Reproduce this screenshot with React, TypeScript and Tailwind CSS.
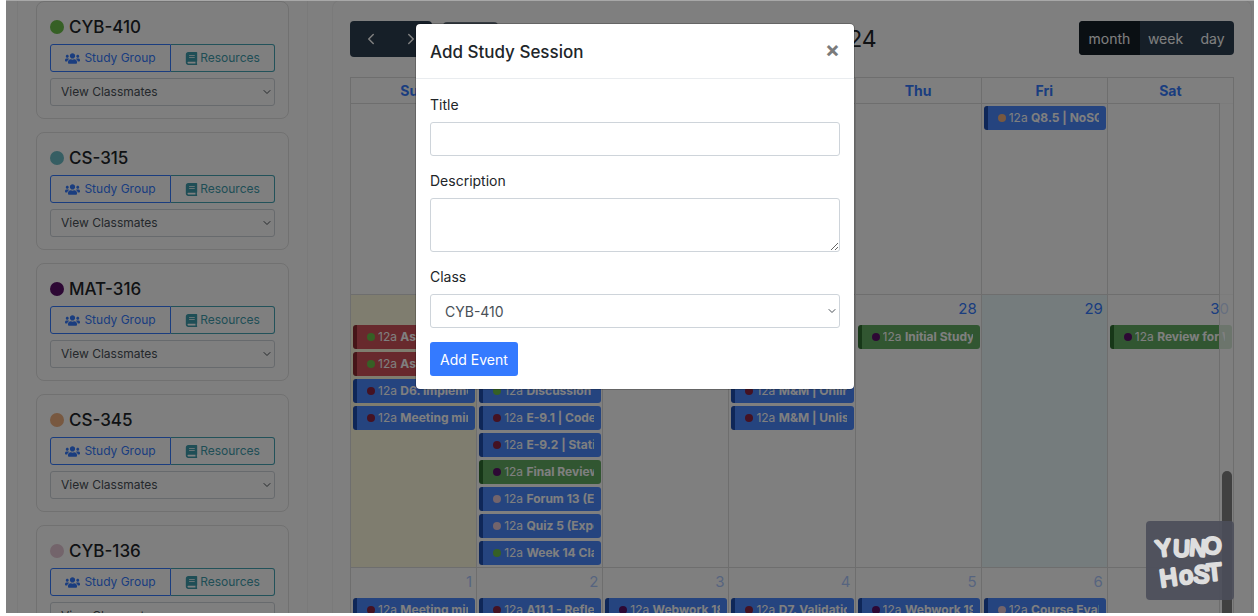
import React from "react";
import { FaBook, FaUsers } from "react-icons/fa";
import { ChevronDown, ChevronLeft, ChevronRight } from "lucide-react";

type Tone = "blue" | "green" | "red";
type CalendarEvent = { title: string; tone: Tone; dot: string } | null;
type Day = { num: string; muted?: boolean; bg?: string; events: CalendarEvent[] };

const tones: Record<Tone, string> = {
  blue: "bg-[#4a88ff] border-[#1f4fb0]",
  green: "bg-[#63ad63] border-[#2f6f30]",
  red: "bg-[#d0535a] border-[#8c2a31]",
};

const GREEN = "bg-[#6cc04a]";
const MAROON = "bg-[#8a2445]";
const PURPLE = "bg-[#5b1169]";
const ORANGE = "bg-[#f0b080]";
const PINK = "bg-[#e6c8d6]";

const courses = [
  { name: "CYB-410", color: "bg-[#6cc04a]" },
  { name: "CS-315", color: "bg-[#6cbcc6]" },
  { name: "MAT-316", color: "bg-[#5b1169]" },
  { name: "CS-345", color: "bg-[#f0b080]" },
  { name: "CYB-136", color: "bg-[#e6c8d6]" },
];

const ev = (title: string, dot: string, tone: Tone = "blue"): CalendarEvent => ({ title, tone, dot });

const firstWeek: CalendarEvent[][] = [[], [], [], [], [], [ev("Q8.5 | NoSQL", ORANGE)], []];

const weeks: Day[][] = [
  [
    {
      num: "24",
      bg: "bg-[#fffadf]",
      events: [
        ev("Assignment", GREEN, "red"),
        ev("Assignment", GREEN, "red"),
        ev("D6. Implementation", MAROON),
        ev("Meeting minutes", MAROON),
      ],
    },
    {
      num: "25",
      events: [
        null,
        null,
        ev("Discussion", GREEN),
        ev("E-9.1 | Code", MAROON),
        ev("E-9.2 | Static", MAROON),
        ev("Final Review", PURPLE, "green"),
        ev("Forum 13 (Ex", PINK),
        ev("Quiz 5 (Expo", PINK),
        ev("Week 14 Class", GREEN),
      ],
    },
    { num: "26", events: [] },
    { num: "27", events: [null, null, ev("M&M | Online", MAROON), ev("M&M | Unlisted", MAROON)] },
    { num: "28", events: [ev("Initial Study", PURPLE, "green")] },
    { num: "29", bg: "bg-[#ebf8fb]", events: [] },
    { num: "30", events: [ev("Review for WW", PURPLE, "green")] },
  ],
  [
    { num: "1", muted: true, events: [ev("Meeting minutes", MAROON)] },
    { num: "2", muted: true, events: [ev("A11.1 - Reflect", MAROON)] },
    { num: "3", muted: true, events: [ev("Webwork 18", PURPLE)] },
    { num: "4", muted: true, events: [ev("D7. Validation", MAROON)] },
    { num: "5", muted: true, events: [ev("Webwork 19", PURPLE)] },
    { num: "6", muted: true, events: [ev("Course Evaluation", PINK)] },
    { num: "7", muted: true, events: [] },
  ],
];

function CourseCard({ name, color }: { name: string; color: string }) {
  return (
    <section className="shrink-0 rounded-lg border border-[#e2e2e2] px-[13px] pt-[13px] pb-3">
      <h5 className="flex items-center gap-[5px] text-[17px] leading-6 font-medium text-[#212529]">
        <span className={`size-[14px] rounded-full ${color}`} />
        {name}
      </h5>
      <div className="mt-[5px] flex h-7 text-[12px]">
        <button className="flex w-[121px] items-center justify-center gap-1 rounded-l-[3px] border border-[#347aff] text-[#347aff]">
          <FaUsers className="size-[15px]" />
          Study Group
        </button>
        <button className="flex flex-1 items-center justify-center gap-[2px] rounded-r-[3px] border border-l-0 border-[#45a5b5] text-[#3f9dad]">
          <FaBook className="size-[13px]" />
          Resources
        </button>
      </div>
      <div className="relative mt-[6px]">
        <select
          aria-label={`${name} classmates`}
          className="block h-7 w-full appearance-none rounded-[3px] border border-[#ced4da] bg-transparent px-[10px] text-[12px] text-[#495057]"
        >
          <option>View Classmates</option>
        </select>
        <ChevronDown className="pointer-events-none absolute top-2 right-[2px] size-3 text-[#495057]" />
      </div>
    </section>
  );
}

function EventList({ events }: { events: CalendarEvent[] }) {
  return (
    <div className="flex flex-col gap-[3px] pr-px pl-[2px]">
      {events.map((e, i) =>
        e ? (
          <a
            key={i}
            href="#"
            className={`flex h-6 items-center rounded-[3px] border-l-4 pr-[7px] pl-[10px] text-[12px] text-white ${tones[e.tone]}`}
          >
            <span className={`mr-[3px] size-2 shrink-0 rounded-full ${e.dot}`} />
            <span className="overflow-hidden whitespace-nowrap">
              12a <b className="font-bold">{e.title}</b>
            </span>
          </a>
        ) : (
          <div key={i} className="h-6" />
        ),
      )}
    </div>
  );
}

function Calendar() {
  return (
    <div className="flex min-h-0 flex-1 flex-col">
      <div className="flex items-start justify-between">
        <div className="flex gap-[11px]">
          <div className="flex h-9 w-[82px] items-center justify-between rounded bg-[#2c3e50] px-3 text-white">
            <button aria-label="Previous">
              <ChevronLeft className="size-[18px]" />
            </button>
            <button aria-label="Next">
              <ChevronRight className="size-[18px]" />
            </button>
          </div>
          <button className="mt-px h-[34px] w-[55px] rounded bg-[#6b7783] text-[14px] text-white">today</button>
        </div>
        <h2 className="text-[23px] leading-9 text-[#212529]">November 2024</h2>
        <div className="flex h-[34px] overflow-hidden rounded bg-[#2c3e50] text-[14px] text-white">
          <button className="w-[61px] bg-[#151e27]">month</button>
          <button className="w-[51px]">week</button>
          <button className="w-[43px]">day</button>
        </div>
      </div>

      <div className="relative mt-5 min-h-0 flex-1 overflow-hidden">
        <table className="w-full table-fixed border-collapse border border-[#dddddd]">
          <thead>
            <tr className="h-[26px]">
              {["Sun", "Mon", "Tue", "Wed", "Thu", "Fri", "Sat"].map((d) => (
                <th key={d} className="border border-[#dddddd] p-0 text-[14px] leading-5 font-bold text-[#347aff]">
                  {d}
                </th>
              ))}
            </tr>
          </thead>
          <tbody>
            <tr className="h-[191px]">
              {firstWeek.map((events, i) => (
                <td key={i} className="border border-[#dddddd] p-0 pt-[2px] align-top">
                  <EventList events={events} />
                </td>
              ))}
            </tr>
            {weeks.map((week, w) => (
              <tr key={w} className="h-[273px]">
                {week.map((day) => (
                  <td key={day.num} className={`border border-[#dddddd] p-0 align-top ${day.bg ?? ""}`}>
                    <div
                      className={`h-[30px] pt-1 pr-1 text-right text-[15px] leading-5 text-[#347aff] ${day.muted ? "opacity-40" : ""}`}
                    >
                      {day.num}
                    </div>
                    <EventList events={day.events} />
                  </td>
                ))}
              </tr>
            ))}
          </tbody>
        </table>
        <div className="absolute top-[26px] right-0 bottom-0 w-[15px] border-x border-[#dddddd] bg-white/75">
          <div className="mx-auto mt-[368px] h-full w-[10px] rounded-full bg-[#808080]" />
        </div>
      </div>
    </div>
  );
}

function SessionDialog() {
  const field = "block w-full rounded-[3px] border border-[#ced4da] bg-white text-[14px] text-[#495057]";
  return (
    <div
      role="dialog"
      aria-labelledby="dialog-title"
      className="w-[438px] rounded-[4px] bg-white text-[14px] text-[#212529] outline outline-black/20"
    >
      <div className="flex h-[55px] items-center justify-between border-b border-[#e9ecef] px-[14px] pt-1">
        <h5 id="dialog-title" className="text-[17px] font-medium">
          Add Study Session
        </h5>
        <button aria-label="Close" className="pb-2 text-[22px] leading-6 font-bold text-[#7b7b7b]">
          ×
        </button>
      </div>
      <form className="px-[14px] pt-[15px] pb-[13px]" onSubmit={(e) => e.preventDefault()}>
        <label htmlFor="title" className="mb-[7px] block leading-[21px]">
          Title
        </label>
        <input id="title" className={`${field} mb-[14px] h-[34px] px-3`} />
        <label htmlFor="description" className="mb-[7px] block leading-[21px]">
          Description
        </label>
        <textarea id="description" className={`${field} mb-[14px] h-[54px] px-3`} />
        <label htmlFor="class" className="mb-[7px] block leading-[21px]">
          Class
        </label>
        <div className="relative mb-[14px]">
          <select id="class" className={`${field} h-[34px] appearance-none px-[14px]`}>
            <option>CYB-410</option>
          </select>
          <ChevronDown className="pointer-events-none absolute top-[11px] right-[2px] size-3 text-[#495057]" />
        </div>
        <button className="h-[34px] w-[88px] rounded-[3px] bg-[#347aff] text-white">Add Event</button>
      </form>
    </div>
  );
}

function HostBadge() {
  return (
    <a href="#" aria-label="YunoHost" className="absolute right-5 bottom-[13px] block h-[79px] w-[88px] rounded-[4px] bg-[#4b4e5a]/90">
      <svg
        viewBox="0 0 88 79"
        className="size-full"
        fill="#dedede"
        stroke="#dedede"
        strokeWidth="3"
        strokeLinejoin="round"
        fontFamily="'Liberation Sans', sans-serif"
        fontWeight="400"
      >
        <text x="11 27 43 57" y="36 35 34 32" rotate="-8 2 5 4" fontSize="23">
          YUNO
        </text>
        <text x="15 34 47 62" y="66 63 61 60" rotate="-8 -4 4 -6" fontSize="24">
          HoST
        </text>
      </svg>
    </a>
  );
}

export default function App() {
  return (
    <div className="h-screen overflow-hidden bg-white pr-1 pb-[3px] pl-[6px] font-['Inter','Liberation_Sans',sans-serif]">
      <div className="relative h-full overflow-hidden">
        <main className="flex h-full">
          <aside className="ml-[11px] flex w-[291px] shrink-0 flex-col gap-[13px] overflow-hidden border-x border-[#f4f4f4] px-[18px] pt-[1px]">
            {courses.map((c) => (
              <CourseCard key={c.name} {...c} />
            ))}
          </aside>
          <section className="mr-[2px] ml-6 flex min-w-0 flex-1 flex-col rounded-t-lg border border-b-0 border-[#f4f4f4] px-[17px] pt-5">
            <Calendar />
          </section>
        </main>
        <div className="absolute inset-0 border-t border-[#a8a8a8] bg-black/50" />
        <div className="absolute inset-0 flex items-start justify-center pt-6 pl-[10px]">
          <SessionDialog />
        </div>
        <HostBadge />
      </div>
    </div>
  );
}
